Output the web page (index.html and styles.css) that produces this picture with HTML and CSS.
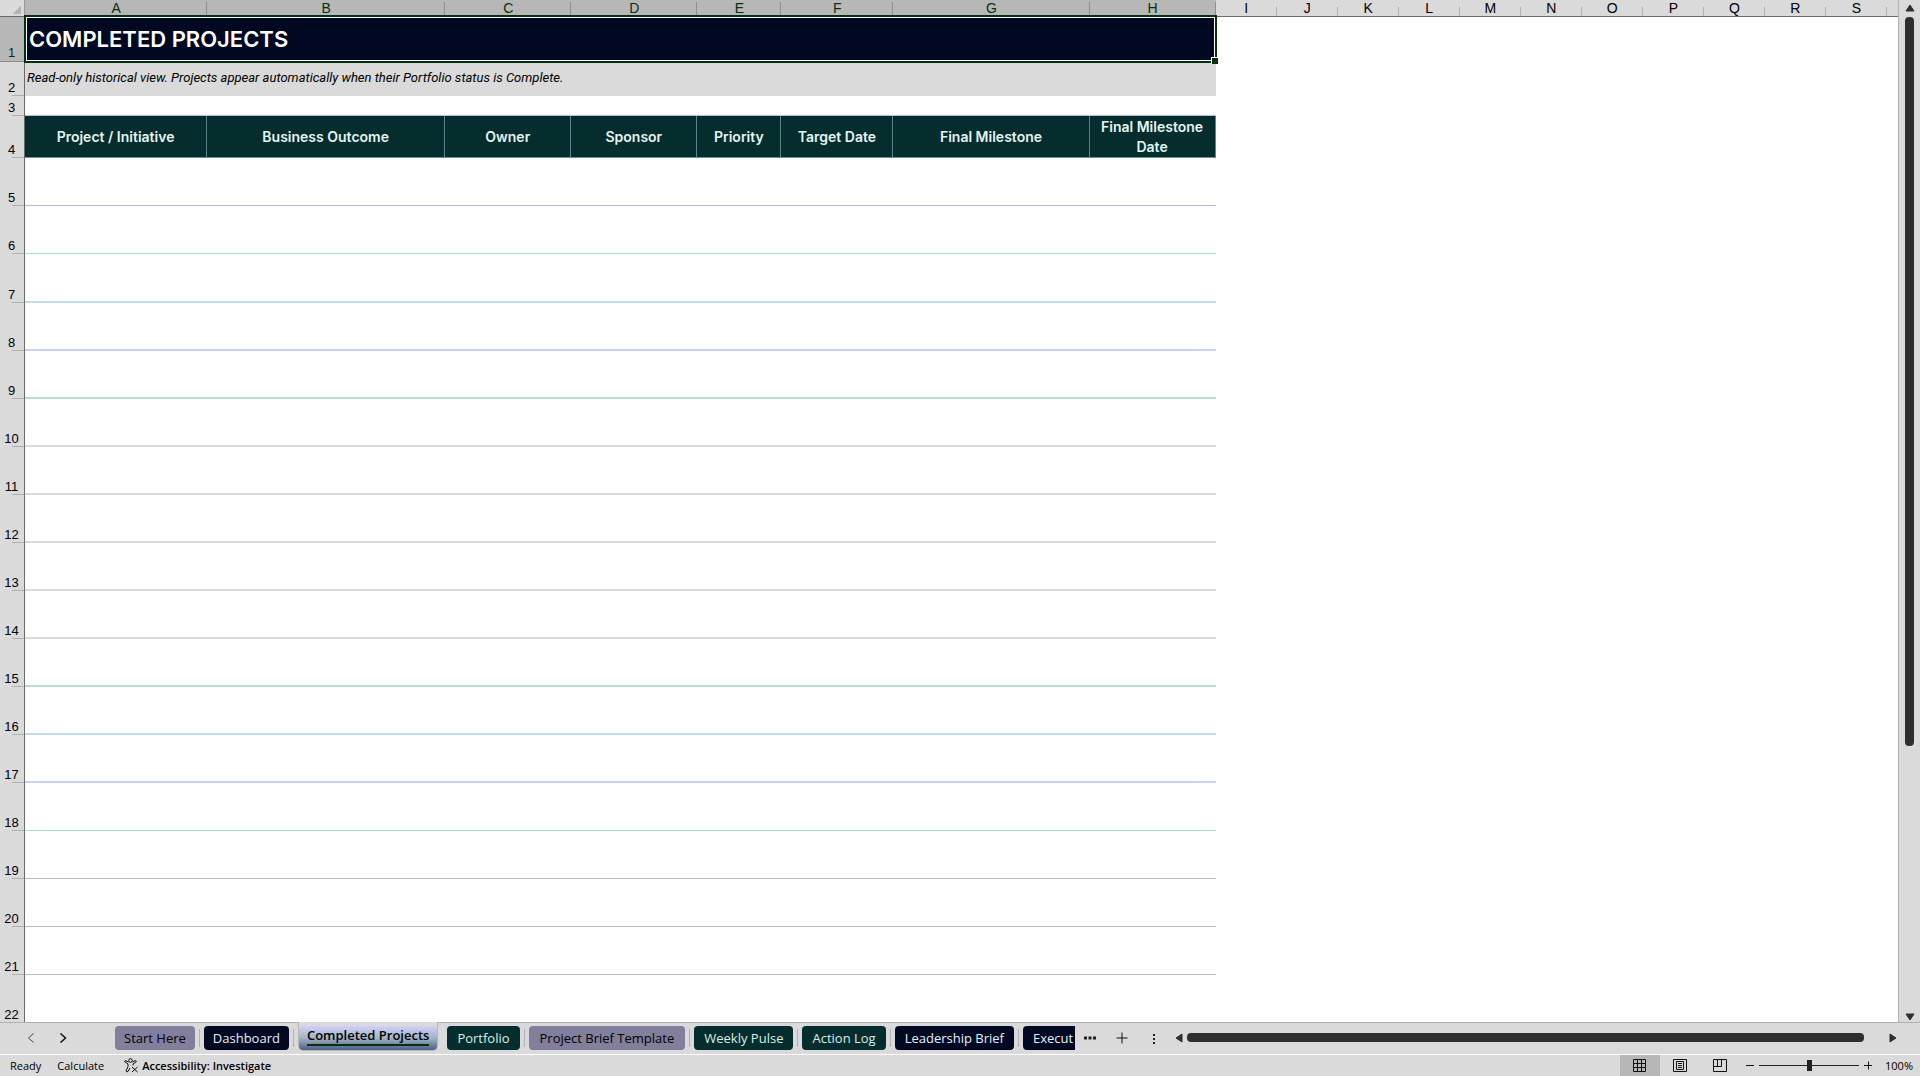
FILE: index.html
```html
<!DOCTYPE html>
<html lang="en">
<head>
  <meta charset="utf-8">
  <title>Completed Projects</title>
  <meta name="viewport" content="width=device-width, initial-scale=1">
  <link rel="stylesheet" href="styles.css">
</head>
<body>
  <div class="workspace">
    <div class="sheet">
      <table class="grid">
        <colgroup>
          <col class="w-head"><col class="w-a"><col class="w-b"><col class="w-c"><col class="w-c"><col class="w-e"><col class="w-f"><col class="w-g"><col class="w-c">
          <col span="11" class="w-std">
        </colgroup>
        <thead>
          <tr class="letters">
            <th class="corner"></th>
            <th class="on">A</th><th class="on">B</th><th class="on">C</th><th class="on">D</th><th class="on">E</th><th class="on">F</th><th class="on">G</th><th class="on">H</th>
            <th>I</th><th>J</th><th>K</th><th>L</th><th>M</th><th>N</th><th>O</th><th>P</th><th>Q</th><th>R</th><th>S</th>
          </tr>
        </thead>
        <tbody>
          <tr class="row-title">
            <th class="on">1</th>
            <td colspan="8" class="title">COMPLETED PROJECTS<span class="selection"></span></td>
          </tr>
          <tr class="row-note">
            <th>2</th>
            <td colspan="8" class="note">Read-only historical view. Projects appear automatically when their Portfolio status is Complete.</td>
          </tr>
          <tr class="row-gap"><th>3</th><td colspan="8" class="violet"></td></tr>
          <tr class="row-fields">
            <th>4</th>
            <td>Project / Initiative</td><td>Business Outcome</td><td>Owner</td><td>Sponsor</td><td>Priority</td><td>Target Date</td><td>Final Milestone</td><td>Final Milestone Date</td>
          </tr>
          <tr><th>5</th><td colspan="8" class="violet"></td></tr>
          <tr><th>6</th><td colspan="8" class="aqua"></td></tr>
          <tr class="row-tall"><th>7</th><td colspan="8" class="soft-aqua"></td></tr>
          <tr><th>8</th><td colspan="8" class="soft-blue"></td></tr>
          <tr><th>9</th><td colspan="8" class="soft-green"></td></tr>
          <tr><th>10</th><td colspan="8" class="soft"></td></tr>
          <tr><th>11</th><td colspan="8" class="soft"></td></tr>
          <tr><th>12</th><td colspan="8" class="soft"></td></tr>
          <tr><th>13</th><td colspan="8" class="soft"></td></tr>
          <tr><th>14</th><td colspan="8" class="soft"></td></tr>
          <tr><th>15</th><td colspan="8" class="soft-green"></td></tr>
          <tr><th>16</th><td colspan="8" class="soft-aqua"></td></tr>
          <tr><th>17</th><td colspan="8" class="soft-blue"></td></tr>
          <tr><th>18</th><td colspan="8" class="aqua"></td></tr>
          <tr><th>19</th><td colspan="8" class="violet"></td></tr>
          <tr><th>20</th><td colspan="8" class="violet"></td></tr>
          <tr><th>21</th><td colspan="8" class="violet"></td></tr>
          <tr><th>22</th><td colspan="8"></td></tr>
        </tbody>
      </table>
    </div>
    <div class="vscroll">
      <button class="arrow" aria-label="Scroll up"><svg width="10" height="8" viewBox="0 0 10 8"><path d="M5 1L9 7H1Z"/></svg></button>
      <div class="vtrack"><div class="vthumb" style="height: 73.6%"></div></div>
      <button class="arrow" aria-label="Scroll down"><svg width="10" height="8" viewBox="0 0 10 8"><path d="M5 7L9 1H1Z"/></svg></button>
    </div>
  </div>

  <div class="tabbar">
    <div class="tabnav">
      <button aria-label="Previous sheet"><svg width="8" height="10" viewBox="0 0 8 10"><path class="dim" d="M6.5 0.5L1.5 5L6.5 9.5"/></svg></button>
      <button aria-label="Next sheet"><svg width="8" height="10" viewBox="0 0 8 10"><path class="bold" d="M1.5 0.5L6.5 5L1.5 9.5"/></svg></button>
    </div>
    <div class="tabs">
      <button class="tab mauve">Start Here</button>
      <button class="tab navy">Dashboard</button>
      <div class="current"><button class="tab active"><span>Completed Projects</span></button></div>
      <button class="tab teal">Portfolio</button>
      <button class="tab mauve wide">Project Brief Template</button>
      <button class="tab teal">Weekly Pulse</button>
      <button class="tab teal">Action Log</button>
      <button class="tab navy">Leadership Brief</button>
      <button class="tab navy">Execut</button>
    </div>
    <div class="tabtools">
      <button aria-label="More sheets"><svg width="12" height="4" viewBox="0 0 12 4"><path class="fill" d="M0 .5h3v3H0zM4.500 .5h3v3h-3zM9 .5h3v3H9z"/></svg></button>
      <button aria-label="New sheet"><svg width="12" height="12" viewBox="0 0 12 12"><path d="M6 0.500V11.500M0.500 6H11.500"/></svg></button>
      <button aria-label="Resize tab bar"><svg width="12" height="12" viewBox="0 0 12 12"><path class="fill" d="M5 2h2v2H5zM5 6h2v2H5zM5 10h2v2H5z"/></svg></button>
    </div>
    <div class="hscroll">
      <button class="arrow" aria-label="Scroll left"><svg width="8" height="10" viewBox="0 0 8 10"><path d="M1 5L7 1V9Z"/></svg></button>
      <div class="htrack"><div class="hthumb" style="width: 97%"></div></div>
      <button class="arrow" aria-label="Scroll right"><svg width="8" height="10" viewBox="0 0 8 10"><path d="M7 5L1 1V9Z"/></svg></button>
    </div>
  </div>

  <div class="statusbar">
    <span class="state">Ready</span>
    <span class="state">Calculate</span>
    <button class="access">
      <svg width="15" height="15" viewBox="0 0 15 15"><circle cx="6.500" cy="2.500" r="1.800"/><path d="M4.500 4L1.500 2.500Q0.300 2.800 1 4L4 6V8.500L2 13Q2.500 14.500 4 13.500L6 10M8.500 4L11.500 2.500Q12.800 2.800 12 4L9 6V7.500M8 9L13.500 14M13.500 9L8 14"/></svg>
      Accessibility: Investigate
    </button>
    <div class="views">
      <button class="view on" aria-label="Normal"><svg width="14" height="14" viewBox="0 0 14 14"><path d="M.5 .5h12v12H.5zM.5 4.500h12M.5 8.500h12M4.500 .5v12M8.500 .5v12"/></svg></button>
      <button class="view" aria-label="Page layout"><svg width="14" height="14" viewBox="0 0 14 14"><path d="M.5 .5h13v12H.5zM3.500 2.500h7v8h-7zM5 4.500h4M5 6.500h4M5 8.500h4"/></svg></button>
      <button class="view" aria-label="Page break preview"><svg width="14" height="14" viewBox="0 0 14 14"><path d="M.5 .5h13v12H.5zM.5 7.500h8V.5M4.500 .5v7"/></svg></button>
    </div>
    <div class="zoom">
      <button aria-label="Zoom out"><svg width="8" height="10" viewBox="0 0 8 10"><path d="M0 4.500H8"/></svg></button>
      <input type="range" min="10" max="190" value="100" aria-label="Zoom">
      <button aria-label="Zoom in"><svg width="8" height="10" viewBox="0 0 8 10"><path d="M0 4.500H8M4.500 0.500V8.500"/></svg></button>
      <button class="percent">100%</button>
    </div>
  </div>
</body>
</html>
```
FILE: styles.css
```css
* {
  box-sizing: border-box;
}
body {
  margin: 0;
  height: 100vh;
  display: flex;
  flex-direction: column;
  overflow: hidden;
  background: #dadada;
  color: #000;
  font-family: "Open Sans", "Noto Sans", sans-serif;
}
button {
  border: 0;
  padding: 0;
  background: none;
  color: inherit;
  font: inherit;
  display: flex;
  align-items: center;
  justify-content: center;
}
svg {
  display: block;
  fill: none;
  stroke: #111;
}
svg .fill {
  fill: #222;
  stroke: none;
}
svg .dim {
  stroke: #444;
}
svg .bold {
  stroke-width: 1.5;
}

/* sheet */
.workspace {
  flex: 1;
  min-height: 0;
  display: flex;
}
.sheet {
  flex: 1;
  min-width: 0;
  overflow: hidden;
  background: linear-gradient(#dadada 16px, #6a6a6a 16px, #6a6a6a 17px, #fff 17px);
  border-right: 1px solid #b0b0b0;
}
.grid {
  table-layout: fixed;
  width: 1887px;
  border-spacing: 0;
}
.w-head { width: 25px; }
.w-a { width: 182px; }
.w-b { width: 238px; }
.w-c { width: 126px; }
.w-e { width: 84px; }
.w-f { width: 112px; }
.w-g { width: 196px; }
.w-std { width: 61px; }
.grid th,
.grid td {
  padding: 0;
}
.grid th {
  font: 14px/16px "Liberation Sans", Arial, sans-serif;
}
.letters th {
  height: 17px;
  border-bottom: 1px solid #6a6a6a;
  background: linear-gradient(#b0b0b0, #b0b0b0) right bottom / 1px 9px no-repeat #dadada;
}
.letters .on {
  background: linear-gradient(#8c8c8c, #8c8c8c) right bottom / 1px 14px no-repeat #b7b7b7;
  color: #04300f;
}
.letters .corner {
  border-right: 1px solid #9a9a9a;
  background: linear-gradient(135deg, transparent 50%, #b4b4b4 50%) 12px 5px / 9px 9px no-repeat #dadada;
}
tbody tr {
  height: 48px;
}
.grid tbody th {
  padding-right: 1px;
  vertical-align: bottom;
  border-right: 1px solid #6a6a6a;
  background: linear-gradient(#b0b0b0, #b0b0b0) right bottom / 12px 1px no-repeat #dadada;
  font-size: 13px;
}
.grid tbody .on {
  background: #b7b7b7;
  border-bottom: 1px solid #8c8c8c;
  color: #04300f;
}
tbody td {
  border-bottom: 1px solid #c4c4c8;
}
tbody .violet { border-color: #b5b5de; }
tbody .aqua { border-color: #a5dcdc; }
tbody .soft { border-bottom: 2px solid #dadada; }
tbody .soft-blue { border-bottom: 2px solid #c8d2f2; }
tbody .soft-aqua { border-bottom: 2px solid #bfdce8; }
tbody .soft-green { border-bottom: 2px solid #bcdcd4; }

tbody .row-title { height: 45px; }
tbody .row-note { height: 34px; }
tbody .row-gap { height: 20px; }
tbody .row-fields { height: 42px; }
tbody .row-tall { height: 49px; }
.grid .title {
  position: relative;
  padding: 0 0 2px 4px;
  border: 0;
  background: #000822;
  color: #fff;
  font: 600 22px/30px Inter, sans-serif;
}
.selection {
  position: absolute;
  inset: -2px -1px -1px -1px;
  border: 2px solid #04300f;
  box-shadow: inset 0 0 0 1px #fff;
}
.selection::after {
  content: "";
  position: absolute;
  right: -3px;
  bottom: -3px;
  width: 6px;
  height: 6px;
  border: 1px solid #fff;
  border-width: 1px 0 0 1px;
  background: #04300f;
}
.grid .note {
  padding: 0 0 2px 2px;
  border: 0;
  background: #dadada;
  font: italic 13px/16px Roboto, sans-serif;
}
.grid .row-fields td {
  padding-top: 1px;
  border-right: 1px solid #5d8288;
  border-bottom-color: #6f9095;
  background: #062d2d;
  color: #e4f4f2;
  text-align: center;
  font: 600 14px/20px Inter, sans-serif;
}

/* scroll bars */
.arrow svg {
  fill: #2e2e2e;
  stroke: #2e2e2e;
  stroke-linejoin: round;
}
.vscroll {
  width: 21px;
  padding: 4px 0 1px;
  display: flex;
  flex-direction: column;
  align-items: center;
  gap: 5px;
}
.vtrack {
  flex: 1;
}
.vthumb {
  width: 9px;
  border-radius: 4px;
  background: #2e2e2e;
}
.hscroll {
  flex: 1;
  display: flex;
  align-items: center;
  gap: 4px;
  padding-right: 23px;
}
.htrack {
  flex: 1;
}
.hthumb {
  height: 9px;
  border-radius: 4px;
  background: #2e2e2e;
}

/* sheet tabs */
.tabbar {
  height: 33px;
  display: flex;
  padding-bottom: 2px;
  border-top: 1px solid #b0b0b0;
  border-bottom: 1px solid #fff;
}
.tabnav {
  width: 115px;
  display: flex;
  align-items: center;
  gap: 24px;
  padding-left: 27px;
}
.tabs {
  position: relative;
  width: 960px;
  display: flex;
  align-items: flex-start;
  gap: 9px;
  margin-top: -1px;
  padding-top: 4px;
  overflow: hidden;
  font-size: 13px;
}
.tab {
  position: relative;
  flex: none;
  height: 24px;
  padding: 0 9px;
  border-radius: 4px;
  white-space: nowrap;
}
/* divider in the gap between two tabs */
.tab::after {
  content: "";
  position: absolute;
  top: 3px;
  right: -5px;
  width: 1px;
  height: 18px;
  background: #b0b0b0;
}
.mauve { background: #817f9b; }
.navy { background: #000822; color: #e6f0fa; }
.teal { background: #062d2d; color: #d8efec; }
.current ~ .tab { padding: 0 10px; }
.current ~ .wide { padding: 0 11px; }
.active {
  align-items: flex-start;
  padding: 0 8px;
  background: linear-gradient(#d0d0fa, #a3b4c4 50%, #4d5f88);
  font-weight: 600;
}
.active::after {
  display: none;
}
.active span {
  line-height: 18px;
  border-bottom: 2px solid #04300f;
}
.current {
  flex: none;
  margin-top: -4px;
  padding-top: 4px;
  border: 1px solid #b8b8b8;
  border-top: 0;
  border-radius: 0 0 5px 5px;
  background: linear-gradient(#dadada 5px, #fff 10px);
}
.tabtools {
  width: 100px;
  display: flex;
  align-items: center;
  gap: 20px;
  padding-left: 9px;
}

/* status bar */
.statusbar {
  height: 21px;
  display: flex;
  align-items: center;
  padding: 0 7px 0 10px;
  font-size: 11px;
}
.state {
  margin-right: 16px;
}
.access {
  gap: 3px;
  margin-left: 4px;
  font-weight: 600;
}
.views {
  display: flex;
  height: 100%;
  margin-left: auto;
}
.view {
  width: 40px;
}
.view.on {
  background: #b7b7b7;
}
.zoom {
  display: flex;
  align-items: center;
  gap: 5px;
  padding-left: 6px;
}
.zoom input {
  appearance: none;
  width: 100px;
  height: 12px;
  margin: 0;
  background: linear-gradient(#222, #222) center / 100% 1px no-repeat;
}
.zoom input::-webkit-slider-thumb {
  appearance: none;
  width: 5px;
  height: 11px;
  background: #222;
}
.percent {
  margin-left: 8px;
}
```
